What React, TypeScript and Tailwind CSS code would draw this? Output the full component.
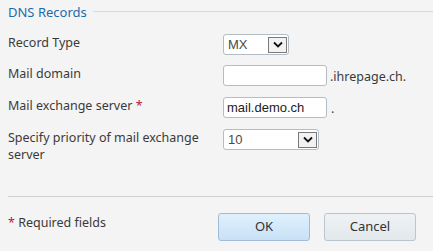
import React from 'react';

const font = { fontFamily: '"Noto Sans", "Open Sans", sans-serif' };

const Chevron = () => (
  <svg width="10" height="7" viewBox="0 0 10 7">
    <path d="M1 1.5 L5 5.5 L9 1.5" fill="none" stroke="#111" strokeWidth="1.8" />
  </svg>
);

const FakeSelect = ({ value, width }: { value: string; width: string }) => (
  <div
    className={`${width} h-[21px] flex items-center justify-between rounded-[3px] border border-[#b4bcc4] bg-white pl-[4px] pr-[1px] text-[13px] text-[#4a4a4a]`}
    style={{ fontFamily: '"Liberation Sans", Arial, sans-serif' }}
  >
    <span>{value}</span>
    <span className="w-[19px] h-[16px] flex items-center justify-center border border-[#7a7a7a] bg-[#f2f2f2]">
      <Chevron />
    </span>
  </div>
);

const TextInput = ({ value }: { value?: string }) => (
  <input
    type="text"
    defaultValue={value}
    className="w-[104px] h-[21px] rounded-[3px] border border-[#b4bcc4] bg-white px-[3px] text-[13px] text-[#222] outline-none"
    style={{ fontFamily: '"Liberation Sans", Arial, sans-serif' }}
  />
);

export default function App() {
  return (
    <div className="w-[433px] h-[251px] bg-[#f4f4f4] overflow-hidden text-[12.5px] text-[#3a3a3a]" style={font}>
      <div className="flex items-center pl-[8px] pt-[3px] h-[20px]">
        <span className="text-[13px] text-[#1c6bab] leading-[18px]">DNS Records</span>
        <div className="flex-1 ml-[6px] border-t border-[#dadada]" />
      </div>

      <div className="flex flex-col gap-[10px] mt-[14px] pl-[8px]">
        <div className="flex items-start">
          <div className="w-[215px] leading-[17px]">Record Type</div>
          <FakeSelect value="MX" width="w-[66px]" />
        </div>
        <div className="flex items-start">
          <div className="w-[215px] leading-[17px]">Mail domain</div>
          <TextInput />
          <span className="ml-[3px] leading-[21px] mt-[1px]">.ihrepage.ch.</span>
        </div>
        <div className="flex items-start">
          <div className="w-[215px] leading-[17px]">
            Mail exchange server <span className="text-[#c0143c]">*</span>
          </div>
          <TextInput value="mail.demo.ch" />
          <span className="ml-[4px] leading-[21px] mt-[1px]">.</span>
        </div>
        <div className="flex items-start">
          <div className="w-[215px] pr-[8px] leading-[17px]">Specify priority of mail exchange server</div>
          <FakeSelect value="10" width="w-[96px]" />
        </div>
      </div>

      <div className="ml-[8px] mt-[33px] border-t border-[#cfcfcf]" />

      <div className="flex items-start justify-between pl-[8px] pr-[17px] pt-[16px]">
        <span className="mt-[1px] leading-[17px]">
          <span className="text-[#c0143c]">*</span> Required fields
        </span>
        <div className="flex gap-[14px]">
          <button className="w-[92px] h-[28px] rounded-[3px] border border-[#9fbdd6] bg-gradient-to-b from-[#e0f0fd] to-[#c8e1f6] text-[13px] text-[#333]">
            OK
          </button>
          <button className="w-[92px] h-[28px] rounded-[3px] border border-[#b9c5cf] bg-gradient-to-b from-[#eef2f5] to-[#e3e8ec] text-[13px] text-[#333]">
            Cancel
          </button>
        </div>
      </div>
    </div>
  );
}
